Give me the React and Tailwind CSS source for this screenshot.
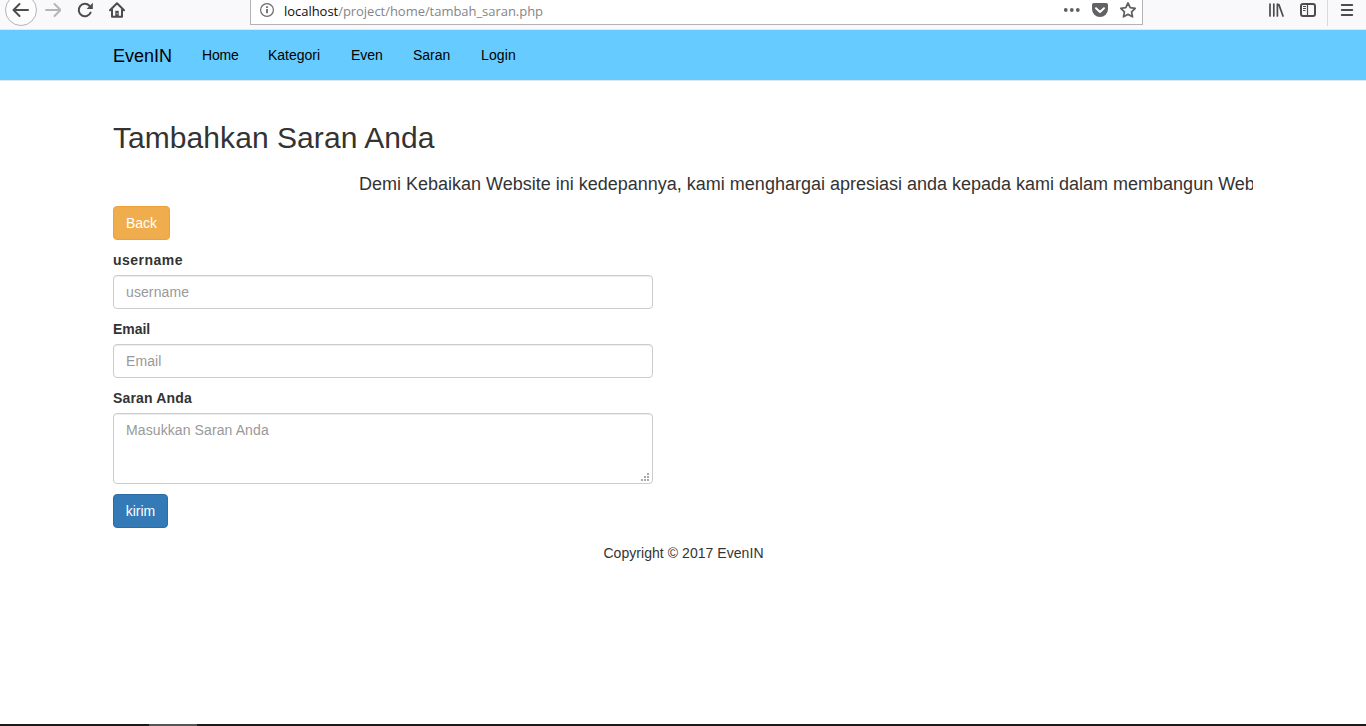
import React from "react";

const stroke = { fill: "none", stroke: "#4c4c4f", strokeWidth: 2, strokeLinecap: "round", strokeLinejoin: "round" };

function Toolbar() {
  return (
    <header className="flex h-[30px] shrink-0 border-b border-[#e3e6ea] bg-[#f9f9fb]">
      <div className="flex w-[250px] shrink-0 pl-[5px]">
        <svg className="h-[29px] w-8 shrink-0" viewBox="0 0 32 29">
          <circle cx="16" cy="10" r="15.5" fill="#fdfdfd" stroke="#b4b4b6" />
          <path d="M23 10H9M14.5 4L8.5 10l6 6" {...stroke} />
        </svg>
        <svg className="ml-2 h-[29px] w-4 shrink-0" viewBox="0 0 16 29">
          <path d="M1 10h14M9.5 4l6 6-6 6" {...stroke} stroke="#b5b5b7" />
        </svg>
        <svg className="ml-4 h-[29px] w-4 shrink-0" viewBox="0 0 16 29">
          <path d="M13.6 12.6A6.2 6.2 0 1 1 12.4 5.7" {...stroke} />
          <path d="M15.8 2.8v6.2H9.6z" fill="#4c4c4f" />
        </svg>
        <svg className="ml-4 h-[29px] w-4 shrink-0" viewBox="0 0 16 29">
          <path d="M1 10.2L8 3.3l7 6.9M3 9.5v7.2h10V9.5" {...stroke} />
          <path d="M6.3 17v-6.2h3.4V17z" fill="#4c4c4f" />
          <path d="M7.6 13h1v1.2h-1z" fill="#ddd" />
        </svg>
      </div>
      <div className="flex h-[25px] w-[893px] shrink-0 border-x border-b border-[#b3b3b5] bg-white">
        <svg className="ml-[9px] h-6 w-[15px] shrink-0" viewBox="0 0 15 24">
          <circle cx="7" cy="10" r="6.4" fill="none" stroke="#6b6b6e" strokeWidth="1.2" />
          <path d="M7 9v4.3M7 6.2v1.7" stroke="#6b6b6e" strokeWidth="1.8" />
        </svg>
        <span className="ml-[9px] pt-0.5 font-['Open_Sans','Noto_Sans',sans-serif] text-[13px] leading-[18px] tracking-[-0.035px] whitespace-nowrap text-[#858587]">
          <span className="text-[#0c0c0d]">localhost</span>/project/home/tambah_saran.php
        </span>
        <div className="ml-auto flex pr-1.5">
          <svg className="h-6 w-[18px]" viewBox="0 0 18 24" fill="#626265">
            <circle cx="1.8" cy="10" r="1.9" />
            <circle cx="7.8" cy="10" r="1.9" />
            <circle cx="13.8" cy="10" r="1.9" />
          </svg>
          <svg className="ml-2.5 h-6 w-4" viewBox="0 0 16 24">
            <path d="M1.8 3h12.4Q16 3 16 4.8V9A8 8 0 0 1 0 9V4.8Q0 3 1.8 3z" fill="#626265" />
            <path d="M4 8.2l4 3.7 4-3.7" fill="none" stroke="#fff" strokeWidth="2" strokeLinecap="round" strokeLinejoin="round" />
          </svg>
          <svg className="ml-3 h-6 w-4" viewBox="0 0 16 24">
            <path d="M8 3l2.2 4.6 5 .7-3.6 3.5.9 5L8 14.4l-4.5 2.4.9-5L.8 8.3l5-.7z" fill="none" stroke="#626265" strokeWidth="1.8" strokeLinejoin="round" />
          </svg>
        </div>
      </div>
      <div className="ml-auto flex pr-3">
        <svg className="h-[29px] w-4" viewBox="0 0 16 29">
          <path d="M2 4v12M5.8 4v12M9.4 4v12M10.9 4.6L15 16" fill="none" stroke="#4c4c4f" strokeWidth="1.7" strokeLinecap="round" />
        </svg>
        <svg className="ml-4 h-[29px] w-4" viewBox="0 0 16 29">
          <rect x="1" y="4" width="14" height="12" rx="2" {...stroke} />
          <path d="M7.5 4v12" stroke="#4c4c4f" strokeWidth="1.2" />
          <path d="M3 6.5h3M3 8.5h3M3 10.5h2.5" stroke="#4c4c4f" />
        </svg>
        <div className="ml-[11px] h-[26px] w-px bg-[#d9d9dc]" />
        <svg className="ml-3 h-[29px] w-3.5" viewBox="0 0 14 29">
          <path d="M1.8 5h10.4M1.8 10h10.4M1.8 15h10.4" {...stroke} />
        </svg>
      </div>
    </header>
  );
}

function Navbar() {
  return (
    <nav className="flex h-[51px] shrink-0 items-center border-b border-[#dbe7ee] bg-[#66ccff] pl-[113px] text-sm text-black">
      <a className="mr-[30px] w-[59px] pt-px text-lg">EvenIN</a>
      <div className="flex gap-[30px] whitespace-nowrap">
        <a className="w-9 tracking-[-0.2px]">Home</a>
        <a className="w-[53px]">Kategori</a>
        <a className="w-8">Even</a>
        <a className="w-[38px]">Saran</a>
        <a className="tracking-[0.15px]">Login</a>
      </div>
    </nav>
  );
}

const field =
  "block w-full rounded border border-[#ccc] bg-white px-3 py-1.5 text-sm text-[#555] shadow-[inset_0_1px_1px_rgba(0,0,0,0.075)] outline-none placeholder:text-[#999] tracking-[0.1px]";

function Label({ className, children }) {
  return <label className={`mb-[5px] block text-sm font-bold ${className}`}>{children}</label>;
}

export default function App() {
  return (
    <div className="flex h-[726px] flex-col overflow-hidden bg-white font-['Liberation_Sans',Arial,sans-serif] text-sm text-[#333]">
      <Toolbar />
      <Navbar />
      <main className="mx-[113px] pt-10">
        <h2 className="text-[30px] leading-[33px] tracking-[0.06px]">Tambahkan Saran Anda</h2>
        <div className="mt-[18px] h-[25px] overflow-hidden pl-[246px] text-lg leading-[25px] whitespace-nowrap">
          Demi Kebaikan Website ini kedepannya, kami menghargai apresiasi anda kepada kami dalam membangun Website
        </div>
        <button className="mt-[9px] block h-[34px] w-[57px] rounded border border-[#eea236] bg-[#f0ad4e] text-sm text-white">
          Back
        </button>
        <form className="mt-2.5 flex w-[540px] flex-col gap-2.5">
          <div>
            <Label className="tracking-[0.48px]">username</Label>
            <input className={`${field} h-[34px]`} placeholder="username" />
          </div>
          <div>
            <Label className="tracking-[-0.05px]">Email</Label>
            <input className={`${field} h-[34px]`} placeholder="Email" />
          </div>
          <div>
            <Label className="tracking-[0.17px]">Saran Anda</Label>
            <div className="relative">
              <textarea className={`${field} h-[71px] resize-none`} placeholder="Masukkan Saran Anda" />
              <svg className="absolute right-1 bottom-[3px] h-2 w-2" viewBox="0 0 8 8" fill="#aaa">
                <path d="M6 0h2v2H6zM3 3h2v2H3zM6 3h2v2H6zM0 6h2v2H0zM3 6h2v2H3zM6 6h2v2H6z" />
              </svg>
            </div>
          </div>
          <button type="button" className="h-[34px] w-[55px] rounded border border-[#2e6da4] bg-[#337ab7] text-sm text-white">
            kirim
          </button>
        </form>
        <footer className="mt-[15px] pl-px text-center tracking-[0.05px]">Copyright © 2017 EvenIN</footer>
      </main>
      <div className="mt-auto flex h-0.5 shrink-0 bg-[#1c1a1b] pl-[149px]">
        <div className="w-12 bg-[#555]" />
      </div>
    </div>
  );
}
